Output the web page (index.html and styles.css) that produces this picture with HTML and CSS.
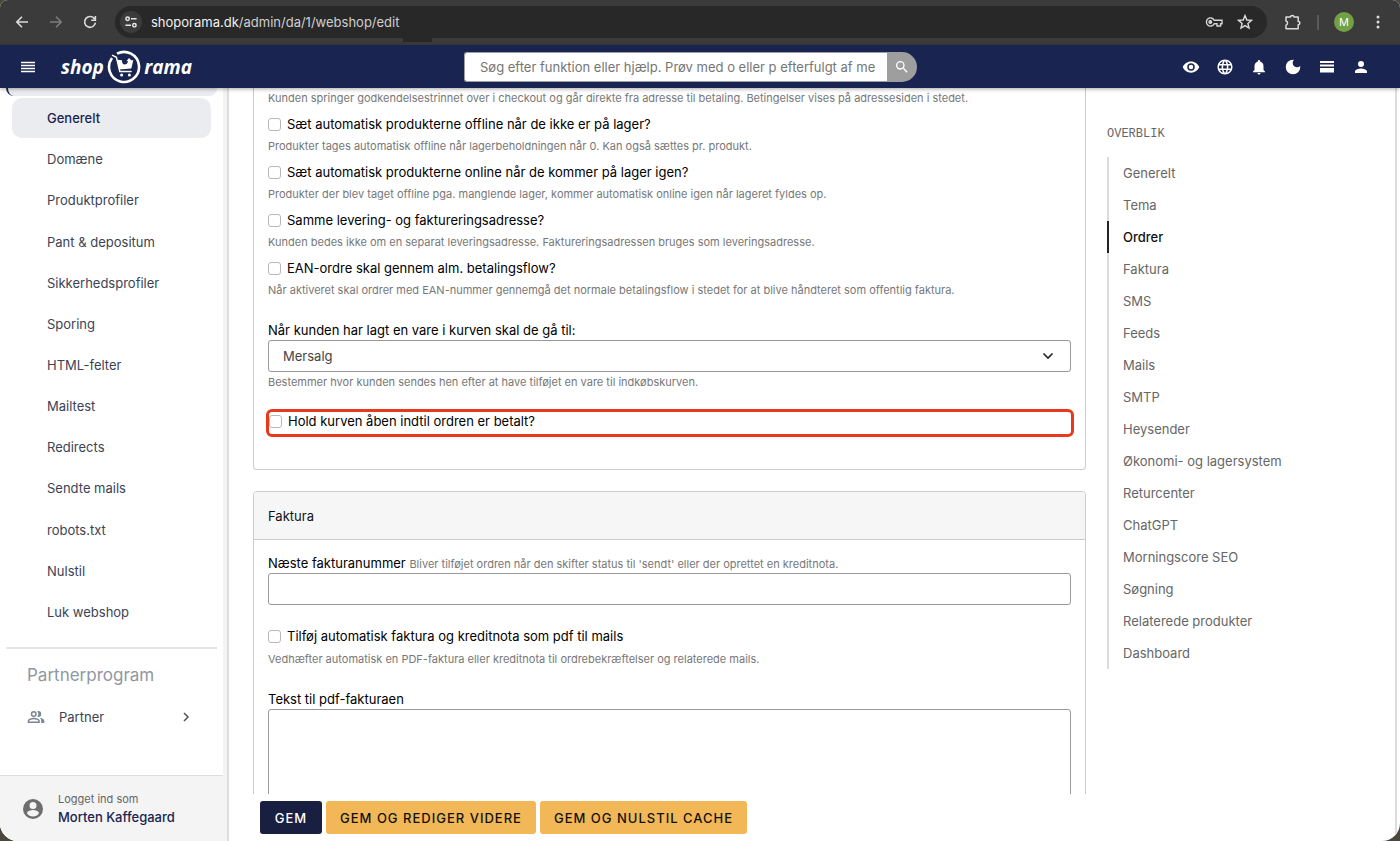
FILE: index.html
```html
<!DOCTYPE html>
<html lang="da">
<head>
<meta charset="utf-8">
<meta name="viewport" content="width=device-width, initial-scale=1">
<title>Shoporama – Webshop</title>
<link rel="stylesheet" href="styles.css">
</head>
<body>
<div class="window">
  <div class="browser">
    <button class="browser-btn" aria-label="Tilbage"><svg width="16" height="16" viewBox="0 0 16 16"><path d="M14 8H3M8 2.8 2.8 8 8 13.2" fill="none" stroke="#dcdcdc" stroke-width="1.6"/></svg></button>
    <button class="browser-btn" aria-label="Frem"><svg width="16" height="16" viewBox="0 0 16 16"><path d="M2 8h11M8 2.8 13.2 8 8 13.2" fill="none" stroke="#7d7d7d" stroke-width="1.6"/></svg></button>
    <button class="browser-btn" aria-label="Genindlæs"><svg width="16" height="16" viewBox="0 0 16 16"><path d="M12.6 5A5.4 5.4 0 1 0 13.4 8.6M13.4 2v4.2H9.2" fill="none" stroke="#dcdcdc" stroke-width="1.6"/></svg></button>
    <div class="address">
      <span class="site-info"><svg width="14" height="14" viewBox="0 0 14 14" fill="none" stroke="#e6e6e6" stroke-width="1.5"><circle cx="3.6" cy="3.8" r="1.7"/><path d="M7 3.8h5.6M1.4 10.2H7"/><circle cx="10.4" cy="10.2" r="1.7"/></svg></span>
      <span class="url"><b>shoporama.dk</b>/admin/da/1/webshop/edit</span>
      <svg width="18" height="18" viewBox="0 0 18 18" fill="none" stroke="#d6d6d6" stroke-width="1.4"><path d="M9.2 7.2A4.1 4.1 0 1 0 9.2 10.8H12V13H15.6V10.8H17V7.2Z"/><circle cx="5.3" cy="9" r="1.3" fill="#d6d6d6"/></svg>
      <svg width="16" height="16" viewBox="0 0 16 16"><path d="M8 1.6 9.8 6l4.7.4-3.6 3.1 1.1 4.6L8 11.6l-4 2.5 1.1-4.6L1.5 6.4 6.2 6Z" fill="none" stroke="#dcdcdc" stroke-width="1.4"/></svg>
    </div>
    <svg width="18" height="18" viewBox="0 0 18 18"><path d="M2 4.1H6.6a1.7 1.7 0 0 1 3.4 0h4.2v4.3a1.7 1.7 0 0 1 0 3.4v3.9H2v-3.5a2.2 2.2 0 0 0 0-4.2Z" fill="none" stroke="#dcdcdc" stroke-width="1.5" stroke-linejoin="round"/></svg>
    <span class="divider"></span>
    <span class="profile">M</span>
    <svg width="16" height="16" viewBox="0 0 16 16" fill="#dcdcdc"><circle cx="8" cy="3" r="1.5"/><circle cx="8" cy="8" r="1.5"/><circle cx="8" cy="13" r="1.5"/></svg>
    <span class="tab-mark"></span>
  </div>

  <header class="topbar">
    <button class="icon-btn" aria-label="Menu"><svg width="14" height="12" viewBox="0 0 14 12"><path d="M0 1.5h14M0 4.5h14M0 7.5h14M0 10.5h14" stroke="#fff" stroke-width="1.3"/></svg></button>
    <a class="logo" href="#" aria-label="shoporama">
      <span>shop</span>
      <svg width="34" height="34" viewBox="0 0 34 34" fill="none" stroke="#fff">
        <path d="M10 3.7A15 15 0 1 1 5 8" stroke-width="2.6"/>
        <path d="M5.5 5.4 9.4 7.2l3.4 14.4H24" stroke-width="1.5" stroke-linecap="round"/>
        <path d="M10.2 9.8 15 10.2c-.2 2.800 1 4.400 2.700 4.400s3-1.300 3.300-3.600l-1.600.2 2.600-3.200 2.300 2.200 2 .1-2 8.300-12.200 1Z" fill="#fff" stroke="none"/>
        <circle cx="14.600" cy="25" r="1.500" fill="#fff" stroke="none"/><circle cx="22.400" cy="25" r="1.500" fill="#fff" stroke="none"/>
      </svg>
      <span>rama</span>
    </a>
    <form class="search">
      <input type="text" aria-label="Søg" placeholder="Søg efter funktion eller hjælp. Prøv med o eller p efterfulgt af me">
      <button type="button" aria-label="Søg"><svg width="16" height="16" viewBox="0 0 24 24"><path fill="#fff" d="M15.5 14h-.79l-.28-.27A6.47 6.47 0 0 0 16 9.5 6.5 6.5 0 1 0 9.5 16c1.61 0 3.09-.59 4.23-1.57l.27.28v.79l5 4.99L20.49 19zm-6 0a4.5 4.5 0 1 1 0-9 4.5 4.5 0 0 1 0 9"/></svg></button>
    </form>
    <div class="tools">
      <button class="icon-btn" aria-label="Vis"><svg width="18" height="18" viewBox="0 0 24 24" fill="#fff"><path d="M12 4.5C7 4.5 2.73 7.61 1 12c1.73 4.39 6 7.5 11 7.5s9.27-3.11 11-7.5c-1.73-4.39-6-7.5-11-7.5M12 17a5 5 0 1 1 0-10 5 5 0 0 1 0 10m0-8a3 3 0 1 0 0 6 3 3 0 0 0 0-6"/></svg></button>
      <button class="icon-btn" aria-label="Sprog"><svg width="18" height="18" viewBox="0 0 24 24" fill="#fff"><path d="M11.99 2C6.47 2 2 6.48 2 12s4.47 10 9.99 10C17.52 22 22 17.52 22 12S17.52 2 11.99 2m6.93 6h-2.95a15.7 15.7 0 0 0-1.38-3.56A8.03 8.03 0 0 1 18.92 8M12 4.04c.83 1.2 1.48 2.53 1.91 3.96h-3.82c.43-1.43 1.08-2.76 1.91-3.96M4.26 14C4.1 13.36 4 12.69 4 12s.1-1.36.26-2h3.38a16.500 16.500 0 0 0 0 4zm.82 2h2.95c.32 1.25.78 2.45 1.38 3.56A7.990 7.990 0 0 1 5.080 16m2.950-8H5.080a7.990 7.990 0 0 1 4.330-3.560A15.700 15.700 0 0 0 8.030 8M12 19.960c-.83-1.200-1.480-2.530-1.910-3.960h3.820A13.900 13.900 0 0 1 12 19.960M14.340 14H9.660a14.700 14.700 0 0 1 0-4h4.680a14.600 14.600 0 0 1 0 4m.25 5.560c.6-1.110 1.060-2.310 1.380-3.560h2.950a8.030 8.030 0 0 1-4.330 3.560M16.360 14a16.500 16.500 0 0 0 0-4h3.380a8.200 8.200 0 0 1 0 4z"/></svg></button>
      <button class="icon-btn" aria-label="Notifikationer"><svg width="18" height="18" viewBox="0 0 24 24" fill="#fff"><path d="M12 22c1.100 0 2-.9 2-2h-4a2 2 0 0 0 2 2m6-6v-5c0-3.070-1.640-5.640-4.500-6.320V4a1.500 1.500 0 0 0-3 0v.68C7.630 5.360 6 7.920 6 11v5l-2 2v1h16v-1z"/></svg></button>
      <button class="icon-btn" aria-label="Mørkt tema"><svg width="18" height="18" viewBox="0 0 24 24" fill="#fff"><path d="M12 2.300A9.700 9.700 0 1 0 21.700 12c0-.5 0-.9-.1-1.300A5.600 5.600 0 1 1 13.300 2.400Z"/></svg></button>
      <button class="icon-btn" aria-label="Visning"><svg width="16" height="16" viewBox="0 0 16 16" fill="#fff"><path d="M1 2h14v2H1zM1 5.500h14v2H1zM1 9h14v4.500H1z"/></svg></button>
      <button class="icon-btn" aria-label="Konto"><svg width="18" height="18" viewBox="0 0 24 24" fill="#fff"><path d="M12 12a4 4 0 1 0 0-8 4 4 0 0 0 0 8m0 2c-2.670 0-8 1.340-8 4v2h16v-2c0-2.660-5.330-4-8-4"/></svg></button>
    </div>
  </header>

  <div class="body">
    <aside class="sidebar">
      <div class="parent-item"></div>
      <nav class="menu">
        <a class="active" href="#">Generelt</a>
        <a href="#">Domæne</a>
        <a href="#">Produktprofiler</a>
        <a href="#">Pant &amp; depositum</a>
        <a href="#">Sikkerhedsprofiler</a>
        <a href="#">Sporing</a>
        <a href="#">HTML-felter</a>
        <a href="#">Mailtest</a>
        <a href="#">Redirects</a>
        <a href="#">Sendte mails</a>
        <a href="#">robots.txt</a>
        <a href="#">Nulstil</a>
        <a href="#">Luk webshop</a>
      </nav>
      <section class="partner">
        <h2>Partnerprogram</h2>
        <a href="#">
          <svg width="18" height="18" viewBox="0 0 24 24" fill="#7b8494"><path d="M16.670 13.130C18.040 14.060 19 15.320 19 17v3h4v-3c0-2.180-3.570-3.470-6.330-3.870M15 12a4 4 0 0 0 0-8c-.47 0-.91.1-1.330.24a5.980 5.980 0 0 1 0 7.520c.42.14.86.24 1.330.24m-6 0a4 4 0 1 0 0-8 4 4 0 0 0 0 8m0-6a2 2 0 1 1 0 4 2 2 0 0 1 0-4m0 7c-2.670 0-8 1.340-8 4v3h16v-3c0-2.660-5.330-4-8-4m6 5H3v-.99C3.200 16.290 6.300 15 9 15s5.800 1.290 6 2z"/></svg>
          <span>Partner</span>
          <svg width="12" height="12" viewBox="0 0 12 12"><path d="M4 2l4 4-4 4" fill="none" stroke="#555" stroke-width="1.500"/></svg>
        </a>
      </section>
      <div class="user">
        <svg width="24" height="24" viewBox="0 0 24 24" fill="#6e6e6e"><path d="M12 2a10 10 0 1 0 0 20 10 10 0 0 0 0-20m0 3a3.500 3.500 0 1 1 0 7 3.500 3.500 0 0 1 0-7m0 14.400a7.200 7.200 0 0 1-6-3.220c.03-1.990 4-3.080 6-3.080s5.970 1.090 6 3.080a7.200 7.200 0 0 1-6 3.220"/></svg>
        <div><small>Logget ind som</small><strong>Morten Kaffegaard</strong></div>
      </div>
    </aside>

    <main class="content">
      <div class="editor">
        <form class="form">
          <div class="cards">
            <section class="card card-orders">
              <p class="help">Kunden springer godkendelsestrinnet over i checkout og går direkte fra adresse til betaling. Betingelser vises på adressesiden i stedet.</p>
              <label class="check"><input type="checkbox">Sæt automatisk produkterne offline når de ikke er på lager?</label>
              <p class="help">Produkter tages automatisk offline når lagerbeholdningen når 0. Kan også sættes pr. produkt.</p>
              <label class="check"><input type="checkbox">Sæt automatisk produkterne online når de kommer på lager igen?</label>
              <p class="help">Produkter der blev taget offline pga. manglende lager, kommer automatisk online igen når lageret fyldes op.</p>
              <label class="check"><input type="checkbox">Samme levering- og faktureringsadresse?</label>
              <p class="help">Kunden bedes ikke om en separat leveringsadresse. Faktureringsadressen bruges som leveringsadresse.</p>
              <label class="check"><input type="checkbox">EAN-ordre skal gennem alm. betalingsflow?</label>
              <p class="help">Når aktiveret skal ordrer med EAN-nummer gennemgå det normale betalingsflow i stedet for at blive håndteret som offentlig faktura.</p>
              <div class="field">
                <label for="after-cart">Når kunden har lagt en vare i kurven skal de gå til:</label>
                <div class="select">
                  <select id="after-cart"><option>Mersalg</option></select>
                  <svg width="12" height="12" viewBox="0 0 12 12"><path d="M1.500 3.500 6 8l4.500-4.500" fill="none" stroke="#222" stroke-width="1.600"/></svg>
                </div>
                <p class="hint">Bestemmer hvor kunden sendes hen efter at have tilføjet en vare til indkøbskurven.</p>
              </div>
              <div class="highlight"><label class="check"><input type="checkbox">Hold kurven åben indtil ordren er betalt?</label></div>
            </section>

            <section class="card card-invoice">
              <h3>Faktura</h3>
              <div class="card-body">
                <div class="field-label"><label for="next-no">Næste fakturanummer</label> <small>Bliver tilføjet ordren når den skifter status til 'sendt' eller der oprettet en kreditnota.</small></div>
                <input id="next-no" class="text-input" type="text">
                <label class="check"><input type="checkbox">Tilføj automatisk faktura og kreditnota som pdf til mails</label>
                <p class="help">Vedhæfter automatisk en PDF-faktura eller kreditnota til ordrebekræftelser og relaterede mails.</p>
                <label class="field-label" for="pdf-text">Tekst til pdf-fakturaen</label>
                <textarea id="pdf-text" class="text-area"></textarea>
              </div>
            </section>
          </div>
          <div class="actions">
            <button type="button" class="btn btn-dark">GEM</button>
            <button type="button" class="btn">GEM OG REDIGER VIDERE</button>
            <button type="button" class="btn">GEM OG NULSTIL CACHE</button>
          </div>
        </form>
        <nav class="overview">
          <h4>OVERBLIK</h4>
          <ul>
            <li><a href="#">Generelt</a></li>
            <li><a href="#">Tema</a></li>
            <li class="current"><a href="#">Ordrer</a></li>
            <li><a href="#">Faktura</a></li>
            <li><a href="#">SMS</a></li>
            <li><a href="#">Feeds</a></li>
            <li><a href="#">Mails</a></li>
            <li><a href="#">SMTP</a></li>
            <li><a href="#">Heysender</a></li>
            <li><a href="#">Økonomi- og lagersystem</a></li>
            <li><a href="#">Returcenter</a></li>
            <li><a href="#">ChatGPT</a></li>
            <li><a href="#">Morningscore SEO</a></li>
            <li><a href="#">Søgning</a></li>
            <li><a href="#">Relaterede produkter</a></li>
            <li><a href="#">Dashboard</a></li>
          </ul>
        </nav>
      </div>
    </main>
  </div>
</div>
</body>
</html>
```
FILE: styles.css
```css
* { box-sizing: border-box; }
body { margin: 0; background: #4b473d; font: 13px/20px Inter, "Liberation Sans", sans-serif; color: #111; }
h2, h3, h4, p, ul { margin: 0; padding: 0; font-weight: 400; }
ul { list-style: none; }
a { color: inherit; text-decoration: none; }
button, input, select, textarea { font: inherit; color: inherit; margin: 0; }
button { border: 0; padding: 0; background: none; display: flex; align-items: center; justify-content: center; }
svg { flex: none; display: block; }

.window { height: 100vh; display: flex; flex-direction: column; overflow: hidden; border-radius: 8px 8px 18px 18px; background: #fff; }

.browser { position: relative; flex: none; height: 45px; padding: 0 14px 1px; display: flex; align-items: center; background: #3b3b3b; }
.browser-btn { width: 16px; height: 16px; margin-right: 18px; }
.address { flex: 1; height: 32px; padding: 0 14px 0 5px; margin: 0 17px 0 -1px; display: flex; align-items: center; gap: 14px; border-radius: 16px; background: #282828; }
.site-info { width: 22px; height: 22px; border-radius: 50%; background: #3b3b3b; display: flex; align-items: center; justify-content: center; }
.url { flex: 1; margin-left: -5px; font-size: 13px; color: #cfcfcf; }
.url b { font-weight: 400; color: #f1f1f1; }
.divider { width: 2px; height: 15px; margin: 0 15px; background: #5a5a5a; }
.profile { width: 20px; height: 20px; margin-right: 16px; border-radius: 50%; background: #71a046; color: #fff; font-size: 11px; text-align: center; }
.tab-mark { position: absolute; left: 403px; bottom: 3px; width: 29px; height: 4px; background: #282828; }

.topbar { position: relative; z-index: 1; flex: none; height: 43px; padding: 0 25px 0 14px; display: flex; align-items: center; background: #1a2450; box-shadow: 0 1px 4px rgba(0, 0, 0, .35); }
.icon-btn { width: 28px; height: 28px; }
.logo { width: 131px; margin-left: 19px; display: flex; align-items: center; justify-content: space-between; color: #fff; font: italic 700 19px/32px "Open Sans", sans-serif; }
.search { flex: none; width: 453px; height: 30px; margin-left: 272px; display: flex; }
.search input { flex: 1; min-width: 0; padding: 0 4px 0 15px; border: 1px solid #9e9e9e; border-right: 0; border-radius: 3px 0 0 3px; background: #fff; outline: 0; }
.search input::placeholder { color: #757575; opacity: 1; }
.search button { width: 30px; border-radius: 0 15px 15px 0; background: #9e9e9e; }
.tools { margin-left: auto; display: flex; gap: 6px; }

.body { flex: 1; min-height: 0; display: flex; }
.sidebar { flex: none; width: 229px; display: flex; flex-direction: column; border-right: 2px solid #ddd; background: linear-gradient(to left, #f3f3f3 4px, #fff 4px); }
.parent-item { height: 8px; margin: 0 10px 2px 6px; border-left: 2px solid #1a2450; border-radius: 0 0 10px 10px; background: #ebecf0; }
.menu { flex: 1; margin: 0 16px 0 12px; display: flex; flex-direction: column; gap: 1px; }
.menu a { flex: 1; padding-left: 35px; display: flex; align-items: center; border-radius: 10px; color: #3b4354; }
.menu .active { background: #ebecf0; color: #1a2450; font-weight: 500; }
.partner { height: 128px; margin: 15px 10px 0 6px; padding: 16px 25px 0 21px; border-top: 2px solid #e4e4e4; }
.partner h2 { font-size: 17px; line-height: 20px; color: #8f97a3; }
.partner a { margin-top: 22px; display: flex; align-items: center; gap: 14px; color: #3b4354; }
.partner a span { flex: 1; }
.user { height: 66px; margin-right: 4px; padding: 0 21px; display: flex; align-items: center; gap: 13px; border-top: 1px solid #ddd; background: #f4f4f4; }
.user small { display: block; font-size: 11px; line-height: 16px; color: #666; }
.user strong { display: block; font-weight: 500; color: #1a2450; }

.content { flex: 1; min-width: 0; margin-right: 3px; border-right: 2px solid #ddd; display: flex; flex-direction: column; }
.editor { flex: 1; min-height: 0; padding-left: 24px; display: flex; gap: 21px; }
.form { flex: 1; min-width: 0; display: flex; flex-direction: column; }
.cards { flex: 1; min-height: 0; overflow: hidden; display: flex; flex-direction: column; gap: 21px; }
.card { flex: none; border: 1px solid #ccc; border-radius: 4px; }
.card-orders { padding: 0 14px 32px; border-top: 0; border-radius: 0 0 4px 4px; }
.check { height: 24px; display: flex; align-items: center; gap: 6px; color: #000; }
.check input { appearance: none; width: 13px; height: 13px; border: 1px solid #b8b8b8; border-radius: 3px; background: #fff; }
.help { margin-bottom: 4px; font-size: 11px; color: #777; }
.field { margin: 20px 0 17px; color: #000; }
.field > label { display: block; }
.select { display: flex; align-items: center; }
.select select { appearance: none; flex: 1; height: 32px; padding: 0 14px; border: 1px solid #999; border-radius: 3px; background: #fff; color: #444; }
.select svg { margin: 0 17px 0 -29px; }
.hint, .field-label small { font-size: 11px; color: #777; }
.highlight { margin: 0 -3px 0 -2px; height: 28px; border: 3px solid #e8391d; border-radius: 6px; }
.highlight .check { height: 18px; }

.card-invoice h3 { height: 48px; padding: 0 14px; border-bottom: 1px solid #ccc; border-radius: 4px 4px 0 0; background: #f6f6f6; font-size: 13px; line-height: 48px; }
.card-body { padding: 13px 14px 20px; }
.field-label { display: block; height: 20px; color: #000; }
.text-input { display: block; width: 100%; height: 32px; border: 1px solid #999; border-radius: 3px; }
.card-body .check { margin: 19px 0 1px; }
.card-body .help { margin-bottom: 20px; }
.text-area { display: block; width: 100%; height: 120px; border: 1px solid #999; border-radius: 3px; resize: none; }
.actions { flex: none; height: 47px; padding: 7px 7px 7px; display: flex; gap: 4px; }
.btn { min-width: 62px; padding: 0 14px; border-radius: 3px; background: #f2b756; color: #111; font-weight: 500; letter-spacing: 1px; }
.btn-dark { background: #191f41; color: #fff; }

.overview { flex: none; width: 288px; padding-top: 36px; color: #666; }
.overview h4 { font: 12px/20px "Liberation Mono", monospace; margin-bottom: 13px; }
.overview li { height: 32px; padding-left: 14px; border-left: 2px solid #ddd; line-height: 32px; }
.overview .current { border-color: #222; color: #111; font-weight: 500; }
```
